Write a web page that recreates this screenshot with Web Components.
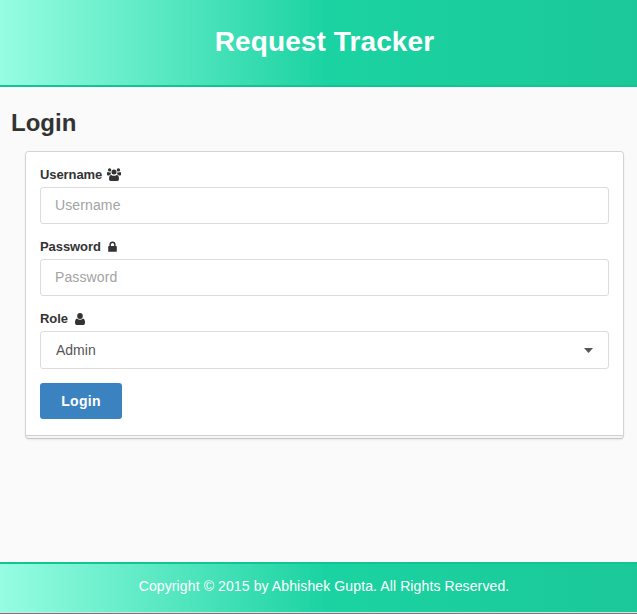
<!DOCTYPE html>
<html lang="en">
<head>
<meta charset="utf-8">
<title>Request Tracker</title>
<style>
html,body{margin:0;height:100%;overflow:hidden;background:#fafafa}
body{font-family:"Liberation Sans",Arial,sans-serif;font-size:14px;color:#333;--brand:linear-gradient(90deg,#96fde2 0%,#1bd3a2 51%,#1bc899 100%);--edge:#12c494}
</style>
</head>
<body>
<request-app></request-app>
<script>
const define = (name, html, setup) => {
  const t = document.createElement('template');
  t.innerHTML = html;
  customElements.define(name, class extends HTMLElement {
    constructor() {
      super();
      this.attachShadow({mode: 'open'}).append(t.content.cloneNode(true));
    }
    connectedCallback() { if (setup) setup(this, this.shadowRoot); }
  });
};

define('app-header', `
<style>
:host{display:block;box-sizing:border-box;height:87px;padding:24px 0 0 12px;background:var(--brand);border-bottom:2px solid var(--edge)}
h1{margin:0;text-align:center;font-size:28px;line-height:36px;color:#fff;letter-spacing:.1px}
</style><h1><slot></slot></h1>`);

define('app-footer', `
<style>
:host{display:block;box-sizing:border-box;height:52px;background:var(--brand);border-top:2px solid var(--edge);border-bottom:1px solid #777;box-shadow:inset 0 -1px #d8e2df}
p{margin:0;padding:13px 0 0 11px;text-align:center;font-size:14px;line-height:18px;color:#fff;letter-spacing:.11px}
</style><p><slot></slot></p>`);

const icons = {
  users: ['0 0 14 13', 14, 13, '<circle cx="2.6" cy="1.9" r="1.7"/><circle cx="11.4" cy="1.9" r="1.7"/><path d="M0 6.8V5Q0 3.8 1 4Q2.4 4.8 3.7 4.2Q3.6 5.5 4.2 6.3Q3 6.4 2.2 7.4H1Q0 7.4 0 6.8ZM14 6.8V5Q14 3.8 13 4Q11.6 4.8 10.3 4.2Q10.4 5.5 9.8 6.3Q11 6.4 11.8 7.4H13Q14 7.4 14 6.8Z"/><circle cx="7" cy="4.1" r="2.5"/><path d="M4.3 7Q7 8.7 9.7 7Q12 7.3 12 10.9Q12 13 10.3 13H3.7Q2 13 2 10.9Q2 7.3 4.3 7Z"/>'],
  lock: ['0 0 9 11', 9, 11, '<path fill-rule="evenodd" d="M1.4 5V3.5Q1.4.5 4.5.5T7.6 3.5V5H8.2Q8.8 5 8.8 5.6V10.2Q8.8 10.8 8.2 10.8H.8Q.2 10.8.2 10.2V5.6Q.2 5 .8 5ZM2.9 5H6.1V3.5Q6.1 2 4.5 2T2.9 3.5Z"/>'],
  user: ['0 0 10 11.5', 10, 12, '<circle cx="5" cy="2.9" r="2.8"/><path d="M2 5.3Q5 7.7 8 5.3Q10 5.8 10 9.4Q10 11.5 8.3 11.5H1.7Q0 11.5 0 9.4Q0 5.8 2 5.3Z"/>']
};
define('ui-icon', `
<style>:host{display:flex;width:16px;height:13px;align-items:center;justify-content:center}svg{display:block;fill:#333}</style>
<svg preserveAspectRatio="none"></svg>`, (el, root) => {
  const icon = icons[el.getAttribute('name')];
  if (!icon) return;
  const [box, w, h, art] = icon;
  const svg = root.querySelector('svg');
  svg.setAttribute('viewBox', box);
  svg.style.width = w + 'px';
  svg.style.height = h + 'px';
  svg.innerHTML = art;
});

define('form-field', `
<style>
:host{display:block;margin-bottom:14px}
.label{display:flex;height:17px;margin-bottom:4px;align-items:center;gap:4px;font-size:13px;line-height:17px;font-weight:bold;color:#333;letter-spacing:-.08px}
.label span{padding-bottom:1px}
</style>
<div class="label"><span></span></div><slot></slot>`, (el, root) => {
  root.querySelector('span').textContent = el.getAttribute('label');
  const icon = document.createElement('ui-icon');
  icon.setAttribute('name', el.getAttribute('icon'));
  root.querySelector('.label').append(icon);
});

define('text-input', `
<style>
:host{display:block}
input{display:block;box-sizing:border-box;width:100%;height:37px;padding:0 14px 2px;border:1px solid #dcdcdc;border-radius:3px;background:#fff;font:14px "Liberation Sans",Arial,sans-serif;letter-spacing:.12px;outline:0}
input::placeholder{color:#a3a3a3;opacity:1}
</style><input>`, (el, root) => {
  const i = root.querySelector('input');
  i.placeholder = el.getAttribute('placeholder');
  i.type = el.getAttribute('type') || 'text';
});

define('select-box', `
<style>
:host{display:flex;box-sizing:border-box;height:38px;padding:0 15px;border:1px solid #dcdcdc;border-radius:3px;background:#fff;align-items:center;justify-content:space-between;color:#555}
svg{width:9px;height:5px;fill:#555}
</style><span><slot></slot></span><svg viewBox="0 0 9 5"><path d="M0 0H9L4.5 5Z"/></svg>`);

define('ui-button', `
<style>
:host{display:block}
button{display:block;width:82px;height:36px;padding:0;border:0;border-radius:3px;background:#3b83c0;color:#fff;font:bold 14px "Liberation Sans",Arial,sans-serif;letter-spacing:.3px}
</style><button><slot></slot></button>`);

define('stacked-segment', `
<style>
:host{display:block;box-sizing:border-box;height:288px;margin:0 13px 0 25px;border:1px solid #d4d4d5;border-bottom-color:#c8c8c8;border-radius:4px;background:#f5f6f6;box-shadow:0 1px 2px rgba(0,0,0,.08)}
div{box-sizing:border-box;height:284px;padding:14px;border-bottom:1px solid #cfcfcf;border-radius:3px 3px 0 0;background:#fff}
</style><div><slot></slot></div>`);

define('request-app', `
<style>
:host{display:flex;height:614px;flex-direction:column}
main{flex:1}
h2{margin:21px 0 13px 11px;font-size:24px;line-height:30px;color:#333}
</style>
<app-header>Request Tracker</app-header>
<main><h2>Login</h2>
<stacked-segment>
<form-field label="Username" icon="users"><text-input placeholder="Username"></text-input></form-field>
<form-field label="Password" icon="lock"><text-input type="password" placeholder="Password"></text-input></form-field>
<form-field label="Role" icon="user"><select-box>Admin</select-box></form-field>
<ui-button>Login</ui-button>
</stacked-segment></main>
<app-footer>Copyright © 2015 by Abhishek Gupta. All Rights Reserved.</app-footer>`);
</script>
</body>
</html>
